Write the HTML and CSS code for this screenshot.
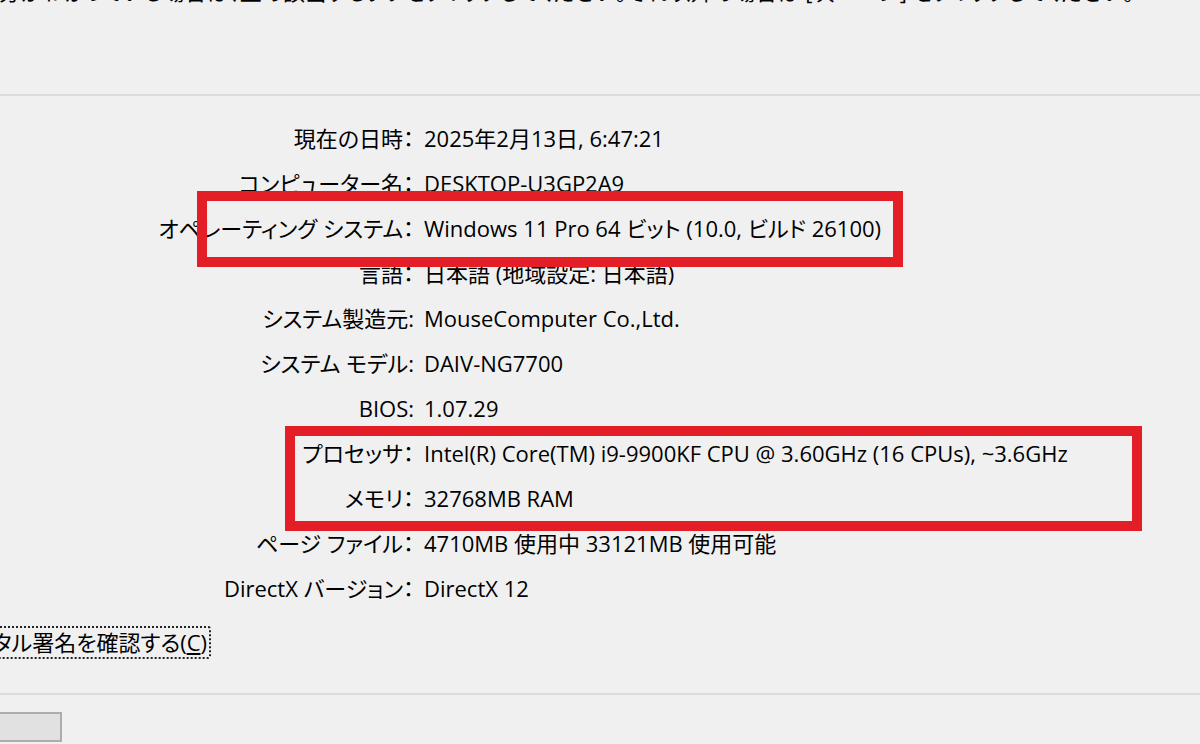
FILE: index.html
```html
<!DOCTYPE html>
<html lang="ja">
<head>
<meta charset="utf-8">
<title>DirectX 診断ツール</title>
<link rel="stylesheet" href="styles.css">
</head>
<body>
<div class="page">
  <div class="intro">
    <p class="intro-line">問題が特定されていて、その部分がわかっている場合は、上の該当するタブをクリックしてください。それ以外の場合は [次ページ] をクリックしてください。</p>
  </div>
  <div class="sep sep-top"></div>

  <div class="info">
    <div class="label">現在の日時：</div><div class="value">2025年2月13日, 6:47:21</div>
    <div class="label">コンピューター名：</div><div class="value">DESKTOP-U3GP2A9</div>
    <div class="label">オペレーティング システム：</div><div class="value">Windows 11 Pro 64 ビット (10.0, ビルド 26100)</div>
    <div class="label">言語：</div><div class="value">日本語 (地域設定: 日本語)</div>
    <div class="label">システム製造元:</div><div class="value">MouseComputer Co.,Ltd.</div>
    <div class="label">システム モデル:</div><div class="value">DAIV-NG7700</div>
    <div class="label">BIOS:</div><div class="value">1.07.29</div>
    <div class="label">プロセッサ：</div><div class="value">Intel(R) Core(TM) i9-9900KF CPU @ 3.60GHz (16 CPUs), ~3.6GHz</div>
    <div class="label">メモリ：</div><div class="value">32768MB RAM</div>
    <div class="label">ページ ファイル：</div><div class="value">4710MB 使用中 33121MB 使用可能</div>
    <div class="label">DirectX バージョン：</div><div class="value">DirectX 12</div>
  </div>

  <div class="check-row">
    <label class="check">
      <span class="box"></span>
      <span class="check-text">デジタル署名を確認する(<u>C</u>)</span>
    </label>
  </div>

  <div class="sep sep-bottom"></div>

  <div class="buttons">
    <button class="btn" type="button">ヘルプ(H)</button>
  </div>

  <div class="mark mark-os"></div>
  <div class="mark mark-cpu"></div>
</div>
</body>
</html>
```
FILE: styles.css
```css
html, body {
  margin: 0;
  padding: 0;
  background: #f0f0f0;
}

body {
  width: 1200px;
  height: 744px;
  overflow: hidden;
  color: #000;
  font-family: "Open Sans", "Noto Sans CJK JP", sans-serif;
  font-size: 22px;
  font-feature-settings: "palt";
}

.page {
  position: relative;
  width: 1200px;
  height: 744px;
  overflow: hidden;
}

.intro {
  display: flex;
  justify-content: flex-end;
  padding-right: 66px;
  height: 10px;
  overflow: hidden;
}

.intro-line {
  margin: -23px 0 0 0;
  line-height: 28px;
  white-space: nowrap;
  flex: none;
}

.sep {
  height: 2px;
  background: #dcdcdc;
}

.sep-top {
  margin-top: 84px;
}

.info {
  margin-top: 20px;
  display: grid;
  grid-template-columns: 414px auto;
  column-gap: 10px;
  grid-auto-rows: 45px;
  line-height: 45px;
}

.label {
  text-align: right;
  white-space: nowrap;
}

.value {
  white-space: nowrap;
}

.check-row {
  margin-top: 15px;
  width: 211px;
  height: 33px;
  display: flex;
  justify-content: flex-end;
  overflow: hidden;
}

.check {
  display: flex;
  align-items: center;
  gap: 8px;
  flex: none;
}

.box {
  width: 22px;
  height: 22px;
  border: 1px solid #333;
  background: #fff;
}

.check-text {
  height: 29px;
  line-height: 29px;
  padding: 0 2px 0 4px;
  border: 2px dotted #222;
  border-radius: 3px;
  white-space: nowrap;
}

.check-text u {
  text-underline-offset: 2px;
}

.sep-bottom {
  margin-top: 34px;
}

.buttons {
  margin-top: 17px;
  width: 62px;
  overflow: hidden;
  display: flex;
  justify-content: flex-end;
}

.btn {
  flex: none;
  width: 150px;
  height: 30px;
  background: #e1e1e1;
  border: 2px solid #adadad;
  font: inherit;
  font-size: 20px;
  color: transparent;
  padding: 0;
}

.mark {
  position: absolute;
  border: 10px solid #e41e26;
  box-sizing: border-box;
}

.mark-os {
  left: 197px;
  top: 191px;
  width: 706px;
  height: 76px;
}

.mark-cpu {
  left: 285px;
  top: 426px;
  width: 857px;
  height: 105px;
}
```
